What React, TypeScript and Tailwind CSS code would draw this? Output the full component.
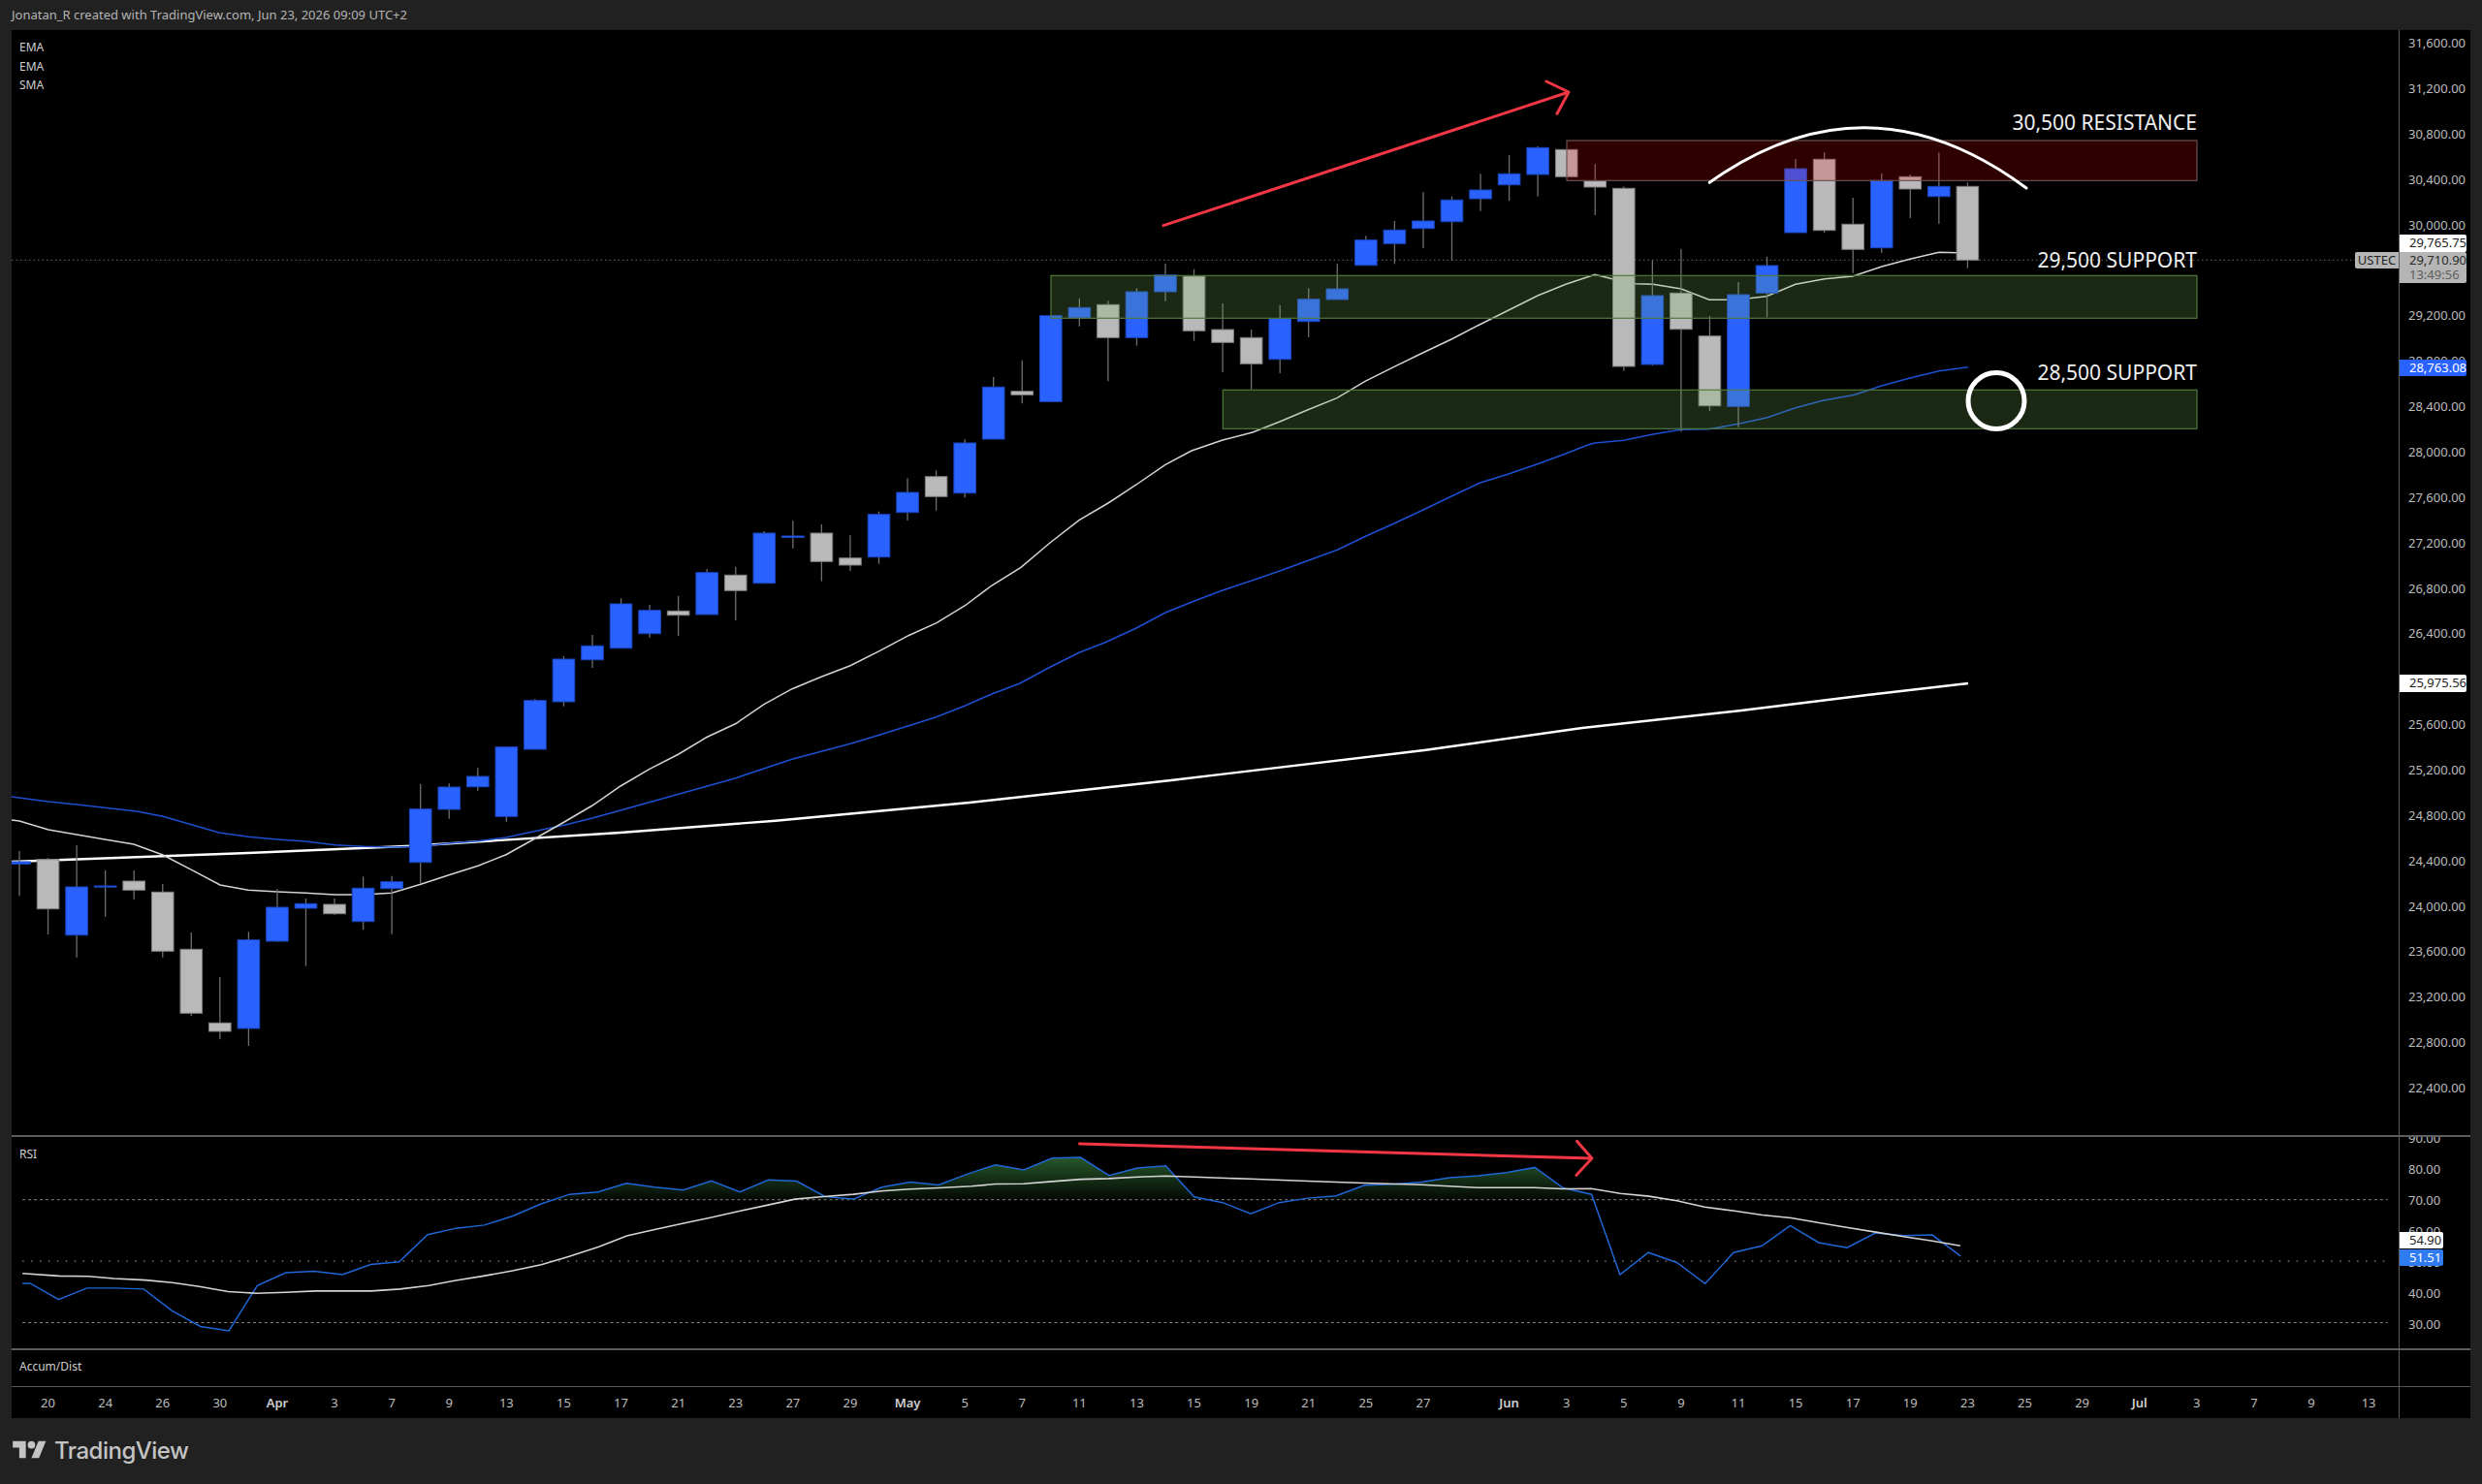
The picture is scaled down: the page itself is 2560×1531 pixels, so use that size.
const FONT = "font-['Noto_Sans',sans-serif]";

// x of a bar on the page
const barX = (i: number) => 20 + 29.55 * i;

// [bodyTop, bodyBottom, wickTop, wickBottom, up]
const candles: [number, number, number, number, boolean][] = [
  [889, 891.3, 878, 924.3, true],
  [886.7, 937.7, 885, 964, false],
  [915, 964.7, 872, 987.7, true],
  [914, 915.2, 897.7, 945.7, true],
  [909, 918.3, 898, 927.7, false],
  [920.3, 981.3, 912, 987.7, false],
  [979.3, 1045.3, 962, 1048.3, false],
  [1055.3, 1064, 1008, 1072.3, false],
  [969.7, 1061, 961.3, 1079, true],
  [936, 971, 917, 971.7, true],
  [932.3, 937, 927, 996.7, true],
  [933, 942.7, 927, 943.7, false],
  [916.3, 950.7, 904.3, 959, true],
  [909.7, 916.7, 903.7, 963.7, true],
  [834.7, 889.7, 809, 911.3, true],
  [812, 835, 808.3, 844.7, true],
  [801, 811.7, 792.3, 815.7, true],
  [770.7, 842.3, 770, 847.7, true],
  [722.7, 773, 721, 773, true],
  [680, 724, 677, 728.7, true],
  [666.3, 680.7, 655, 689, true],
  [623, 668.7, 617.3, 668.7, true],
  [629.7, 653.7, 624, 657.7, true],
  [630.3, 634.7, 614.7, 656, false],
  [590.7, 634, 587.3, 634, true],
  [593.3, 609.3, 584.7, 640, false],
  [550, 601.7, 548, 601.7, true],
  [553, 554.5, 537.3, 566, true],
  [550, 579.3, 541, 599.7, false],
  [575.7, 583, 552.3, 589, false],
  [530.7, 574.7, 527.7, 581.7, true],
  [508, 528.7, 493.3, 537, true],
  [491.7, 512.3, 485.3, 526.7, false],
  [457, 508.7, 453.3, 513.3, true],
  [399.3, 453, 389, 453, true],
  [403.7, 407.3, 371.7, 416.3, false],
  [325.7, 414.3, 325.7, 415, true],
  [317.3, 328, 307.7, 336.7, true],
  [314.3, 348.3, 310.3, 393.3, false],
  [301, 348.3, 297.3, 356.7, true],
  [283.7, 301, 272, 310.7, true],
  [285, 341.3, 277.7, 351.7, false],
  [340, 353.3, 313, 384, false],
  [348.3, 375.3, 340, 401.7, false],
  [328.7, 370.7, 315, 385, true],
  [308.7, 331.7, 297.3, 348, true],
  [298, 309, 272.3, 309, true],
  [247.7, 273.7, 243.3, 273.7, true],
  [237.3, 251.3, 228, 272.3, true],
  [228, 235.7, 198.3, 256, true],
  [206.3, 228.7, 202.7, 269, true],
  [196, 205, 179.3, 217.7, true],
  [179.3, 190.7, 160, 207, true],
  [152.3, 180, 151, 202.7, true],
  [154.3, 182.3, 154.3, 182.3, false],
  [186.7, 193, 169.3, 222, false],
  [194.3, 378, 192.3, 382.7, false],
  [305, 376, 268.3, 377.3, true],
  [302.3, 339.7, 256.7, 445.3, false],
  [346.7, 418.7, 326, 424, false],
  [304, 419.3, 291, 440.7, true],
  [274, 302.3, 265, 327.3, true],
  [174, 240, 164, 240, true],
  [164.3, 237.7, 157.3, 240, false],
  [231.3, 257.3, 204, 281.7, false],
  [186.3, 255.7, 179, 261, true],
  [182.3, 195, 180, 225, false],
  [192.3, 202.7, 157.3, 231, true],
  [192.3, 268.3, 188.3, 276.7, false],
];

const ema20 = "12,846 20,847 50,856 79,861 108,866 138,871 168,882 198,897.7 227,913 256,918.3 286,920 315,921.3 345,923 374,923 404,921.3 434,912.3 463,902.7 493,893.3 522,881.7 552,865 582,848 611,831 640,811 670,793.3 700,778 729,760.5 759,746.5 788,726.7 817,710.7 847,698.3 877,686.7 907,671.7 937,655.7 966,642.7 995,625 1023,604 1053,585.3 1083,560 1113,536.7 1143,519 1172,500 1202,479.3 1229,465 1261,454 1292,446 1320,435 1349,422.7 1379,410.7 1408,393.3 1438,378.3 1467,364.3 1497,350 1526,335 1556,320 1586,305 1615,293.3 1645,283.3 1675,290.7 1687,292.7 1705,293.3 1734,298 1763,309.3 1793,309 1822,305.7 1852,293.3 1882,287.7 1911,285 1941,275 1970,267.3 2000,260.3 2029,261";

const ema50 = "12,822 50,827 79,830 141,837 168,842.3 226,859 256,863.3 286,866 315,868 346,871.7 375,873.3 404,874 434,873.3 463,870 493,867.7 522,864 553,857.3 584,850.7 611,844 640,836 700,819.3 759,802.7 817,783.3 877,767.3 907,758.3 965,740 995,728.3 1023,716 1052,705 1083,688.3 1113,673.3 1140,662.7 1172,648 1202,632 1232,620 1261,609 1291,599 1320,589 1350,578 1380,567 1409,553 1438,540 1468,526 1497,512 1527,498 1556,489 1585,479 1615,468 1637,459.3 1645,457 1675,454.3 1705,448 1734,443.3 1763,442.7 1793,437.3 1822,431 1852,420.7 1880,413.3 1913,407.3 1940,398.3 1970,390 2000,382.7 2030,378.7";

const sma200 = "12,889 256,880 424,872.7 640,859 800,846.7 1000,828 1208,805 1469,774 1632,751 1796,733 1926,717 2030,705";

const rsiY = [1325.3, 1342.3, 1330.3, 1330.3, 1331.3, 1354, 1370.3, 1374.7, 1327.7, 1314.3, 1312.7, 1316.3, 1305.7, 1303, 1274.7, 1268, 1264.7, 1255.3, 1242.7, 1232.7, 1230.3, 1221.3, 1225.3, 1228.3, 1218.7, 1230.3, 1217.7, 1219, 1235, 1237.7, 1225.3, 1220, 1223, 1211.7, 1202, 1207.3, 1195, 1194.3, 1213, 1205.3, 1203, 1235.3, 1241.3, 1253, 1241.3, 1236.7, 1234.3, 1223.3, 1222.3, 1220, 1215.3, 1213.3, 1210, 1204.7, 1226, 1232.7, 1316.3, 1293.3, 1303.7, 1325.7, 1293.3, 1286.3, 1265.3, 1283, 1288.3, 1273, 1275.7, 1275, 1297];
const rsiLine = "12,1325.7 " + rsiY.map((y, i) => `${barX(i)},${y}`).join(" ");

const rsiMa = "12,1315 50,1317.7 81,1318 107,1320.3 140,1322 168,1324.7 196,1328.7 226,1334 256,1335.7 286,1334.7 317,1333.3 375,1333.3 405,1331.3 435,1327.7 463,1322.3 492,1317.7 522,1312.3 552,1306 581,1297.3 612,1287.3 641,1276 670,1269.3 699,1263 729,1256.7 758,1250.3 787,1244 816,1237.7 846,1235 877,1232.7 906,1229.3 936,1227.3 966,1226 1000,1224.3 1025,1222 1054,1221.7 1084,1219.3 1114,1217 1143,1216.3 1173,1214.7 1202,1213.7 1232,1214.7 1290,1216.7 1350,1219 1408,1221 1468,1222.7 1526,1225.7 1586,1225.7 1615,1227 1645,1226.7 1675,1231.7 1705,1234.7 1734,1239.3 1763,1246 1794,1250 1823,1254.3 1853,1257.3 1882,1262.3 1912,1267.3 1941,1272 1970,1276.7 2000,1281.3 2029,1286.3";

const priceTicks = ["31,600.00", "31,200.00", "30,800.00", "30,400.00", "30,000.00", "29,600.00", "29,200.00", "28,800.00", "28,400.00", "28,000.00", "27,600.00", "27,200.00", "26,800.00", "26,400.00", "26,000.00", "25,600.00", "25,200.00", "24,800.00", "24,400.00", "24,000.00", "23,600.00", "23,200.00", "22,800.00", "22,400.00"];
const rsiTicks = ["90.00", "80.00", "70.00", "60.00", "50.00", "40.00", "30.00"];

const timeTicks: [number, string, boolean?][] = [
  [1, "20"], [3, "24"], [5, "26"], [7, "30"], [9, "Apr", true], [11, "3"], [13, "7"], [15, "9"], [17, "13"], [19, "15"], [21, "17"],
  [23, "21"], [25, "23"], [27, "27"], [29, "29"], [31, "May", true], [33, "5"], [35, "7"], [37, "11"], [39, "13"], [41, "15"],
  [43, "19"], [45, "21"], [47, "25"], [49, "27"], [52, "Jun", true], [54, "3"], [56, "5"], [58, "9"], [60, "11"], [62, "15"],
  [64, "17"], [66, "19"], [68, "23"], [70, "25"], [72, "29"], [74, "Jul", true], [76, "3"], [78, "7"], [80, "9"], [82, "13"],
];

function MainChart() {
  return (
    <svg className="absolute inset-0 w-full h-full" viewBox="12 31 2462 1140">
      <line x1="12" y1="268.3" x2="2430" y2="268.3" stroke="#6a6a6a" strokeWidth="1" strokeDasharray="1.5 3" />

      {/* moving averages sit behind the bars */}
      <polyline points={sma200} fill="none" stroke="#ffffff" strokeWidth="2.4" />
      <polyline points={ema50} fill="none" stroke="#1d4fd0" strokeWidth="1.6" />
      <polyline points={ema20} fill="none" stroke="#d4d4d4" strokeWidth="1.5" />

      {candles.map(([top, bottom, wTop, wBottom, up], i) => (
        <g key={i}>
          <line x1={barX(i)} x2={barX(i)} y1={wTop} y2={wBottom} stroke="#6e6e6e" strokeWidth="1.3" />
          <rect
            x={barX(i) - 11.3}
            y={top}
            width="22.6"
            height={bottom - top}
            fill={up ? "#2962ff" : "#b9b9b9"}
            stroke={up ? "#1c46c0" : "#7c7c7c"}
            strokeWidth="1"
          />
        </g>
      ))}

      {/* zones */}
      <rect x="1616" y="145" width="650" height="41.3" fill="#ff0000" fillOpacity="0.18" stroke="#6b5252" strokeWidth="1.2" />
      <rect x="1084" y="284.3" width="1182" height="44" fill="#76b65b" fillOpacity="0.22" stroke="#4f7a3c" strokeWidth="1.2" />
      <rect x="1261.3" y="402.3" width="1004.7" height="40" fill="#76b65b" fillOpacity="0.22" stroke="#4f7a3c" strokeWidth="1.2" />

      {/* drawings */}
      <path d="M1200 232.7 L1618 95 M1595 84 L1618 95 L1606 117.3" fill="none" stroke="#f23645" strokeWidth="3" strokeLinecap="round" strokeLinejoin="round" />
      <path d="M1763.3 188.3 Q1926 72.4 2090 194" fill="none" stroke="#ffffff" strokeWidth="3" strokeLinecap="round" />
      <circle cx="2059" cy="413.5" r="29" fill="none" stroke="#ffffff" strokeWidth="5" />
    </svg>
  );
}

function RsiChart() {
  return (
    <svg className="absolute inset-0 w-full h-full" viewBox="12 1173 2462 220">
      <defs>
        <linearGradient id="rsiFill" gradientUnits="userSpaceOnUse" x1="0" y1="1194" x2="0" y2="1238">
          <stop offset="0" stopColor="#27572a" />
          <stop offset="1" stopColor="#27572a" stopOpacity="0.1" />
        </linearGradient>
        <clipPath id="above70">
          <rect x="12" y="1173" width="2462" height="65.3" />
        </clipPath>
      </defs>
      <line x1="12" y1="1238.3" x2="2474" y2="1238.3" stroke="#8a8a8a" strokeWidth="1" strokeDasharray="3 3" />
      <line x1="12" y1="1302.3" x2="2474" y2="1302.3" stroke="#8a8a8a" strokeWidth="1.2" strokeDasharray="1.5 7.5" />
      <line x1="12" y1="1366.3" x2="2474" y2="1366.3" stroke="#8a8a8a" strokeWidth="1" strokeDasharray="3 3" />
      <polygon points={`12,1238.3 ${rsiLine} 2030,1238.3`} fill="url(#rsiFill)" clipPath="url(#above70)" />
      <polyline points={rsiLine} fill="none" stroke="#1f66d6" strokeWidth="1.5" />
      <polyline points={rsiMa} fill="none" stroke="#d4d4d4" strokeWidth="1.6" />
      <path d="M1112.3 1180 L1645.6 1195.3 M1630 1177.3 L1645.6 1195.3 L1629.5 1212.7" fill="none" stroke="#f23645" strokeWidth="3" strokeLinecap="round" strokeLinejoin="round" />
    </svg>
  );
}

function PriceTag({ top, className, children }: { top: string; className: string; children: React.ReactNode }) {
  return <div className={`absolute left-0 ${top} ${className} rounded-r-[2px] flex items-center pl-[10px] text-[13px]`}>{children}</div>;
}

export default function App() {
  return (
    <div className={`w-[2560px] h-[1531px] bg-[#212121] flex flex-col overflow-hidden ${FONT}`}>
      <div className="h-[31px] pl-3 flex items-center text-[13px] text-[#b4b4b4]">
        Jonatan_R created with TradingView.com, Jun 23, 2026 09:09 UTC+2
      </div>

      <div className="ml-3 w-[2536px] h-[1432px] bg-black flex flex-col text-[13px] text-[#bdbdbd]">
        {/* price pane */}
        <div className="h-[1140px] flex">
          <div className="relative w-[2462px]">
            <MainChart />
            <div className="absolute left-2 top-[8px] flex flex-col leading-[19.5px] text-[12px] text-[#cfcfcf]">
              <span>EMA</span>
              <span>EMA</span>
              <span>SMA</span>
            </div>
            <span className="absolute right-[208px] top-[81px] text-[21px] leading-[28px] text-[#efefef]">30,500 RESISTANCE</span>
            <span className="absolute right-[208px] top-[223px] text-[21px] leading-[28px] text-[#efefef]">29,500 SUPPORT</span>
            <span className="absolute right-[208px] top-[339px] text-[21px] leading-[28px] text-[#efefef]">28,500 SUPPORT</span>
            <div className="absolute right-0 top-[229px] h-[17px] w-[45px] bg-[#b5b5b5] rounded-l-[2px] flex items-center justify-center text-[13px] text-[#222]">USTEC</div>
          </div>
          <div className="relative w-[74px] border-l-[1.5px] border-[#5a5a5a] overflow-hidden">
            <div className="flex flex-col mt-[-9.4px]">
              {priceTicks.map((t) => (
                <div key={t} className="h-[46.87px] shrink-0 flex items-center pl-[9px]">{t}</div>
              ))}
            </div>
            <PriceTag top="top-[211px]" className="w-[69px] h-[17.5px] bg-white text-[#222]">29,765.75</PriceTag>
            <div className="absolute left-0 top-[229px] w-[69px] h-[31.5px] bg-[#b5b5b5] rounded-r-[2px] pl-[10px] flex flex-col justify-center leading-[15px] text-[#2a2a2a]">
              <span>29,710.90</span>
              <span className="text-[#5e5e5e]">13:49:56</span>
            </div>
            <PriceTag top="top-[340px]" className="w-[69px] h-[17px] bg-[#2962ff] text-white">28,763.08</PriceTag>
            <PriceTag top="top-[665px]" className="w-[69px] h-[18px] bg-white text-[#222]">25,975.56</PriceTag>
          </div>
        </div>

        {/* rsi pane */}
        <div className="h-[222px] flex border-t-2 border-b-2 border-[#5e5e5e]">
          <div className="relative w-[2462px]">
            <RsiChart />
            <span className="absolute left-2 top-[9px] text-[12px] text-[#cfcfcf]">RSI</span>
          </div>
          <div className="relative w-[74px] border-l-[1.5px] border-[#5a5a5a] overflow-hidden">
            <div className="flex flex-col mt-[-14.3px]">
              {rsiTicks.map((t) => (
                <div key={t} className="h-[32px] shrink-0 flex items-center pl-[9px]">{t}</div>
              ))}
            </div>
            <PriceTag top="top-[98px]" className="w-[45px] h-[17px] bg-white text-[#222]">54.90</PriceTag>
            <PriceTag top="top-[116px]" className="w-[45px] h-[17px] bg-[#2f7cf0] text-white">51.51</PriceTag>
          </div>
        </div>

        {/* accum/dist pane */}
        <div className="h-[38px] flex border-b border-[#555]">
          <div className="w-[2462px] pl-2 pt-[8px] text-[12px] text-[#cfcfcf]">Accum/Dist</div>
          <div className="w-[74px] border-l-[1.5px] border-[#5a5a5a]" />
        </div>

        {/* time axis */}
        <div className="flex-1 flex">
          <div className="relative w-[2462px]">
            {timeTicks.map(([i, label, bold]) => (
              <span
                key={`${i}-${label}`}
                className={`absolute top-[7px] -translate-x-1/2 ${bold ? "font-semibold text-[#d0d0d0]" : ""}`}
                style={{ left: barX(i) - 12 }}
              >
                {label}
              </span>
            ))}
          </div>
          <div className="w-[74px] border-l-[1.5px] border-[#5a5a5a]" />
        </div>
      </div>

      <div className="flex-1 pl-[13px] flex items-start pt-[22px] gap-2">
        <svg className="w-[35px] h-[27px] mt-[-2px]" viewBox="0 0 36 28" fill="#c4c4c4">
          <path d="M14 22H7V11H0V4h14v18zM28 22h-8l7.5-18h8L28 22z" />
          <circle cx="20" cy="8" r="4" />
        </svg>
        <span className="font-['Inter',sans-serif] font-medium text-[24px] leading-[24px] text-[#c4c4c4] tracking-[-0.5px]">TradingView</span>
      </div>
    </div>
  );
}
